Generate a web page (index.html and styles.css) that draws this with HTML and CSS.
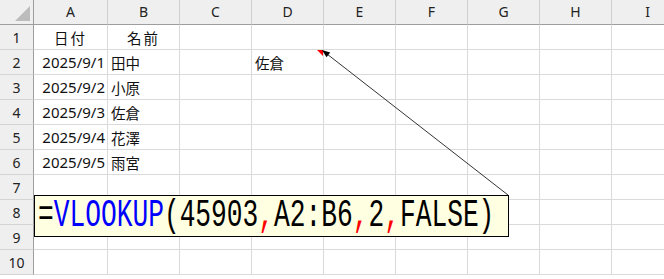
FILE: index.html
```html
<!DOCTYPE html>
<html lang="ja">
<head>
<meta charset="utf-8">
<title>VLOOKUP</title>
<link rel="stylesheet" href="styles.css">
</head>
<body>
<div class="sheet">
  <div class="corner"><span class="tri"></span></div>
  <div class="ch">A</div><div class="ch">B</div><div class="ch">C</div><div class="ch">D</div><div class="ch">E</div><div class="ch">F</div><div class="ch">G</div><div class="ch">H</div><div class="ch">I</div>

  <div class="rh">1</div><div class="c ctr">日付</div><div class="c ctr">名前</div><div class="c"></div><div class="c"></div><div class="c"></div><div class="c"></div><div class="c"></div><div class="c"></div><div class="c"></div>
  <div class="rh">2</div><div class="c num">2025/9/1</div><div class="c">田中</div><div class="c"></div><div class="c">佐倉</div><div class="c"></div><div class="c"></div><div class="c"></div><div class="c"></div><div class="c"></div>
  <div class="rh">3</div><div class="c num">2025/9/2</div><div class="c">小原</div><div class="c"></div><div class="c"></div><div class="c"></div><div class="c"></div><div class="c"></div><div class="c"></div><div class="c"></div>
  <div class="rh">4</div><div class="c num">2025/9/3</div><div class="c">佐倉</div><div class="c"></div><div class="c"></div><div class="c"></div><div class="c"></div><div class="c"></div><div class="c"></div><div class="c"></div>
  <div class="rh">5</div><div class="c num">2025/9/4</div><div class="c">花澤</div><div class="c"></div><div class="c"></div><div class="c"></div><div class="c"></div><div class="c"></div><div class="c"></div><div class="c"></div>
  <div class="rh">6</div><div class="c num">2025/9/5</div><div class="c">雨宮</div><div class="c"></div><div class="c"></div><div class="c"></div><div class="c"></div><div class="c"></div><div class="c"></div><div class="c"></div>
  <div class="rh">7</div><div class="c"></div><div class="c"></div><div class="c"></div><div class="c"></div><div class="c"></div><div class="c"></div><div class="c"></div><div class="c"></div><div class="c"></div>
  <div class="rh">8</div><div class="c"></div><div class="c"></div><div class="c"></div><div class="c"></div><div class="c"></div><div class="c"></div><div class="c"></div><div class="c"></div><div class="c"></div>
  <div class="rh">9</div><div class="c"></div><div class="c"></div><div class="c"></div><div class="c"></div><div class="c"></div><div class="c"></div><div class="c"></div><div class="c"></div><div class="c"></div>
  <div class="rh">10</div><div class="c"></div><div class="c"></div><div class="c"></div><div class="c"></div><div class="c"></div><div class="c"></div><div class="c"></div><div class="c"></div><div class="c"></div>
</div>

<div class="callout"><span class="formula"><span class="k">=</span><span class="fn">VLOOKUP</span><span class="k">(45903</span><span class="sep">,</span><span class="k">A2:B6</span><span class="sep">,</span><span class="k">2</span><span class="sep">,</span><span class="k">FALSE)</span></span></div>

<svg class="overlay" width="664" height="279" viewBox="0 0 664 279" xmlns="http://www.w3.org/2000/svg">
  <polygon points="317,50 323,50 323,56" fill="#ff0000"/>
  <line x1="508" y1="195" x2="327" y2="54" stroke="#333" stroke-width="1"/>
  <polygon points="322,50 330.2,52.5 326.5,57.3" fill="#000"/>
</svg>
</body>
</html>
```

FILE: styles.css
```css
html, body {
  margin: 0;
  padding: 0;
  background: #fff;
  overflow: hidden;
}

body {
  width: 664px;
  height: 279px;
  position: relative;
  font-family: "Noto Sans CJK JP", "Noto Sans", sans-serif;
}

.sheet {
  display: grid;
  grid-template-columns: 34px 74px repeat(8, 72px);
  grid-template-rows: repeat(11, 25px) 4px;
  height: 279px;
  overflow: hidden;
}

.sheet > div {
  box-sizing: border-box;
}

.corner {
  background: #efefef;
  border-right: 1px solid #9e9e9e;
  border-bottom: 1px solid #9e9e9e;
  position: relative;
}

.tri {
  position: absolute;
  right: 3px;
  bottom: 3px;
  width: 0;
  height: 0;
  border-left: 15px solid transparent;
  border-bottom: 15px solid #bcbcbc;
}

.ch {
  background: #efefef;
  border-right: 1px solid #cfcfcf;
  border-bottom: 1px solid #9e9e9e;
  display: flex;
  align-items: center;
  justify-content: center;
  font-family: "Noto Sans", sans-serif;
  font-size: 14px;
  color: #222;
  padding-bottom: 1px;
}

.rh {
  background: #efefef;
  border-right: 1px solid #9e9e9e;
  border-bottom: 1px solid #d4d4d4;
  display: flex;
  align-items: center;
  justify-content: center;
  font-family: "Noto Sans", sans-serif;
  font-size: 14px;
  color: #222;
}

.c {
  border-right: 1px solid #dadada;
  border-bottom: 1px solid #dadada;
  display: flex;
  align-items: center;
  padding: 0 3px;
  font-size: 14.5px;
  color: #111;
  white-space: nowrap;
  overflow: visible;
}

.ctr {
  justify-content: center;
  letter-spacing: 2px;
}

.num {
  justify-content: flex-end;
  font-family: "Noto Sans", "Noto Sans CJK JP", sans-serif;
  font-size: 15px;
  padding-right: 2px;
}

.callout {
  position: absolute;
  left: 34px;
  top: 195px;
  width: 475px;
  height: 42px;
  box-sizing: border-box;
  background: #ffffe1;
  border: 1px solid #000;
  display: flex;
  align-items: center;
  padding-left: 3px;
  overflow: hidden;
}

.formula {
  display: inline-block;
  font-family: "Liberation Mono", monospace;
  font-size: 38px;
  line-height: 40px;
  white-space: nowrap;
  transform: scaleX(0.69);
  transform-origin: left center;
  color: #000;
}

.fn { color: #0000ff; }
.sep { color: #ff0000; }

.overlay {
  position: absolute;
  left: 0;
  top: 0;
  pointer-events: none;
}
```
